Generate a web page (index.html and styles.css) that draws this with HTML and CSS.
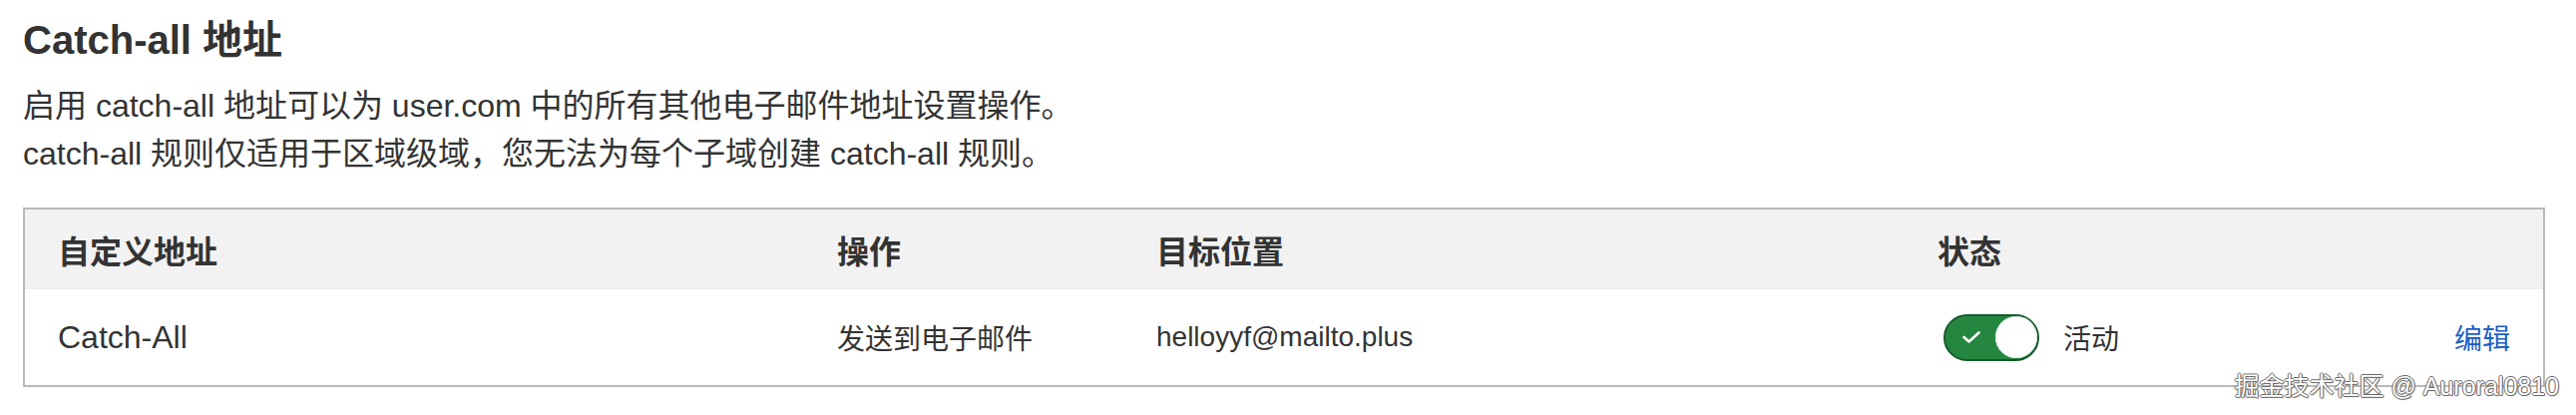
FILE: index.html
```html
<!DOCTYPE html>
<html lang="zh-CN">
<head>
<meta charset="utf-8">
<title>Catch-all 地址</title>
<link rel="stylesheet" href="styles.css">
</head>
<body>
<div class="page">
  <h1 class="title">Catch-all 地址</h1>
  <p class="desc">启用 catch-all 地址可以为 user.com 中的所有其他电子邮件地址设置操作。<br>catch-all 规则仅适用于区域级域，您无法为每个子域创建 catch-all 规则。</p>
  <div class="table">
    <div class="row head">
      <div class="cell">自定义地址</div>
      <div class="cell">操作</div>
      <div class="cell">目标位置</div>
      <div class="cell">状态</div>
      <div class="cell end"></div>
    </div>
    <div class="row body">
      <div class="cell name">Catch-All</div>
      <div class="cell small">发送到电子邮件</div>
      <div class="cell small">helloyyf@mailto.plus</div>
      <div class="cell small status">
        <span class="toggle">
          <svg class="check" width="20" height="14" viewBox="0 0 20 14"><polyline points="2.5,7 7.5,11.5 17.5,2.5" fill="none" stroke="#fff" stroke-width="2.6" stroke-linecap="round" stroke-linejoin="round"/></svg>
          <span class="knob"></span>
        </span>
        <span>活动</span>
      </div>
      <div class="cell small end"><a class="edit" href="#">编辑</a></div>
    </div>
  </div>
</div>
<div class="watermark">掘金技术社区 @ Auroral0810</div>
</body>
</html>
```
FILE: styles.css
```css
html, body {
  margin: 0;
  padding: 0;
  background: #ffffff;
}
body {
  font-family: "Liberation Sans", "Noto Sans CJK SC", sans-serif;
  color: #333333;
  width: 2582px;
  height: 416px;
  overflow: hidden;
  position: relative;
}
.page {
  padding: 16px 31px 0 23px;
}
.title {
  margin: 0;
  font-size: 40px;
  line-height: 48px;
  font-weight: 700;
  color: #333333;
}
.desc {
  margin: 18px 0 0 0;
  font-size: 32px;
  line-height: 48px;
  color: #333333;
}
.table {
  margin-top: 30px;
  border: 2px solid #b9b9b9;
}
.row {
  display: grid;
  grid-template-columns: 781px 320px 783px 1fr auto;
  align-items: center;
}
.head {
  height: 79px;
  background: #f2f2f2;
  font-size: 32px;
  font-weight: 700;
  border-bottom: 1px solid #ebebeb;
}
.body {
  height: 96px;
  font-size: 32px;
}
.cell {
  padding-left: 33px;
  white-space: nowrap;
}
.cell.end {
  padding-left: 0;
  padding-right: 33px;
  text-align: right;
}
.small {
  font-size: 28px;
}
.status {
  display: flex;
  align-items: center;
  gap: 24px;
}
.toggle {
  box-sizing: border-box;
  width: 96px;
  height: 47px;
  margin-left: 6px;
  border-radius: 24px;
  background: #25873f;
  border: 2px solid #17592b;
  display: flex;
  align-items: center;
  justify-content: space-between;
  padding: 0 0 0 16px;
}
.check {
  display: block;
}
.knob {
  width: 42px;
  height: 42px;
  border-radius: 50%;
  background: #ffffff;
  box-shadow: inset 0 0 0 1px #d8eadc;
}
.edit {
  color: #1b5ec6;
  text-decoration: none;
}
.watermark {
  position: absolute;
  right: 17px;
  top: 372px;
  font-size: 25px;
  line-height: 30px;
  color: #ffffff;
  white-space: nowrap;
  text-shadow: 1px 0 0 #6a6a6a, -1px 0 0 #6a6a6a, 0 1px 0 #6a6a6a, 0 -1px 0 #6a6a6a, 1px 1px 1px #8a8a8a;
}
```
